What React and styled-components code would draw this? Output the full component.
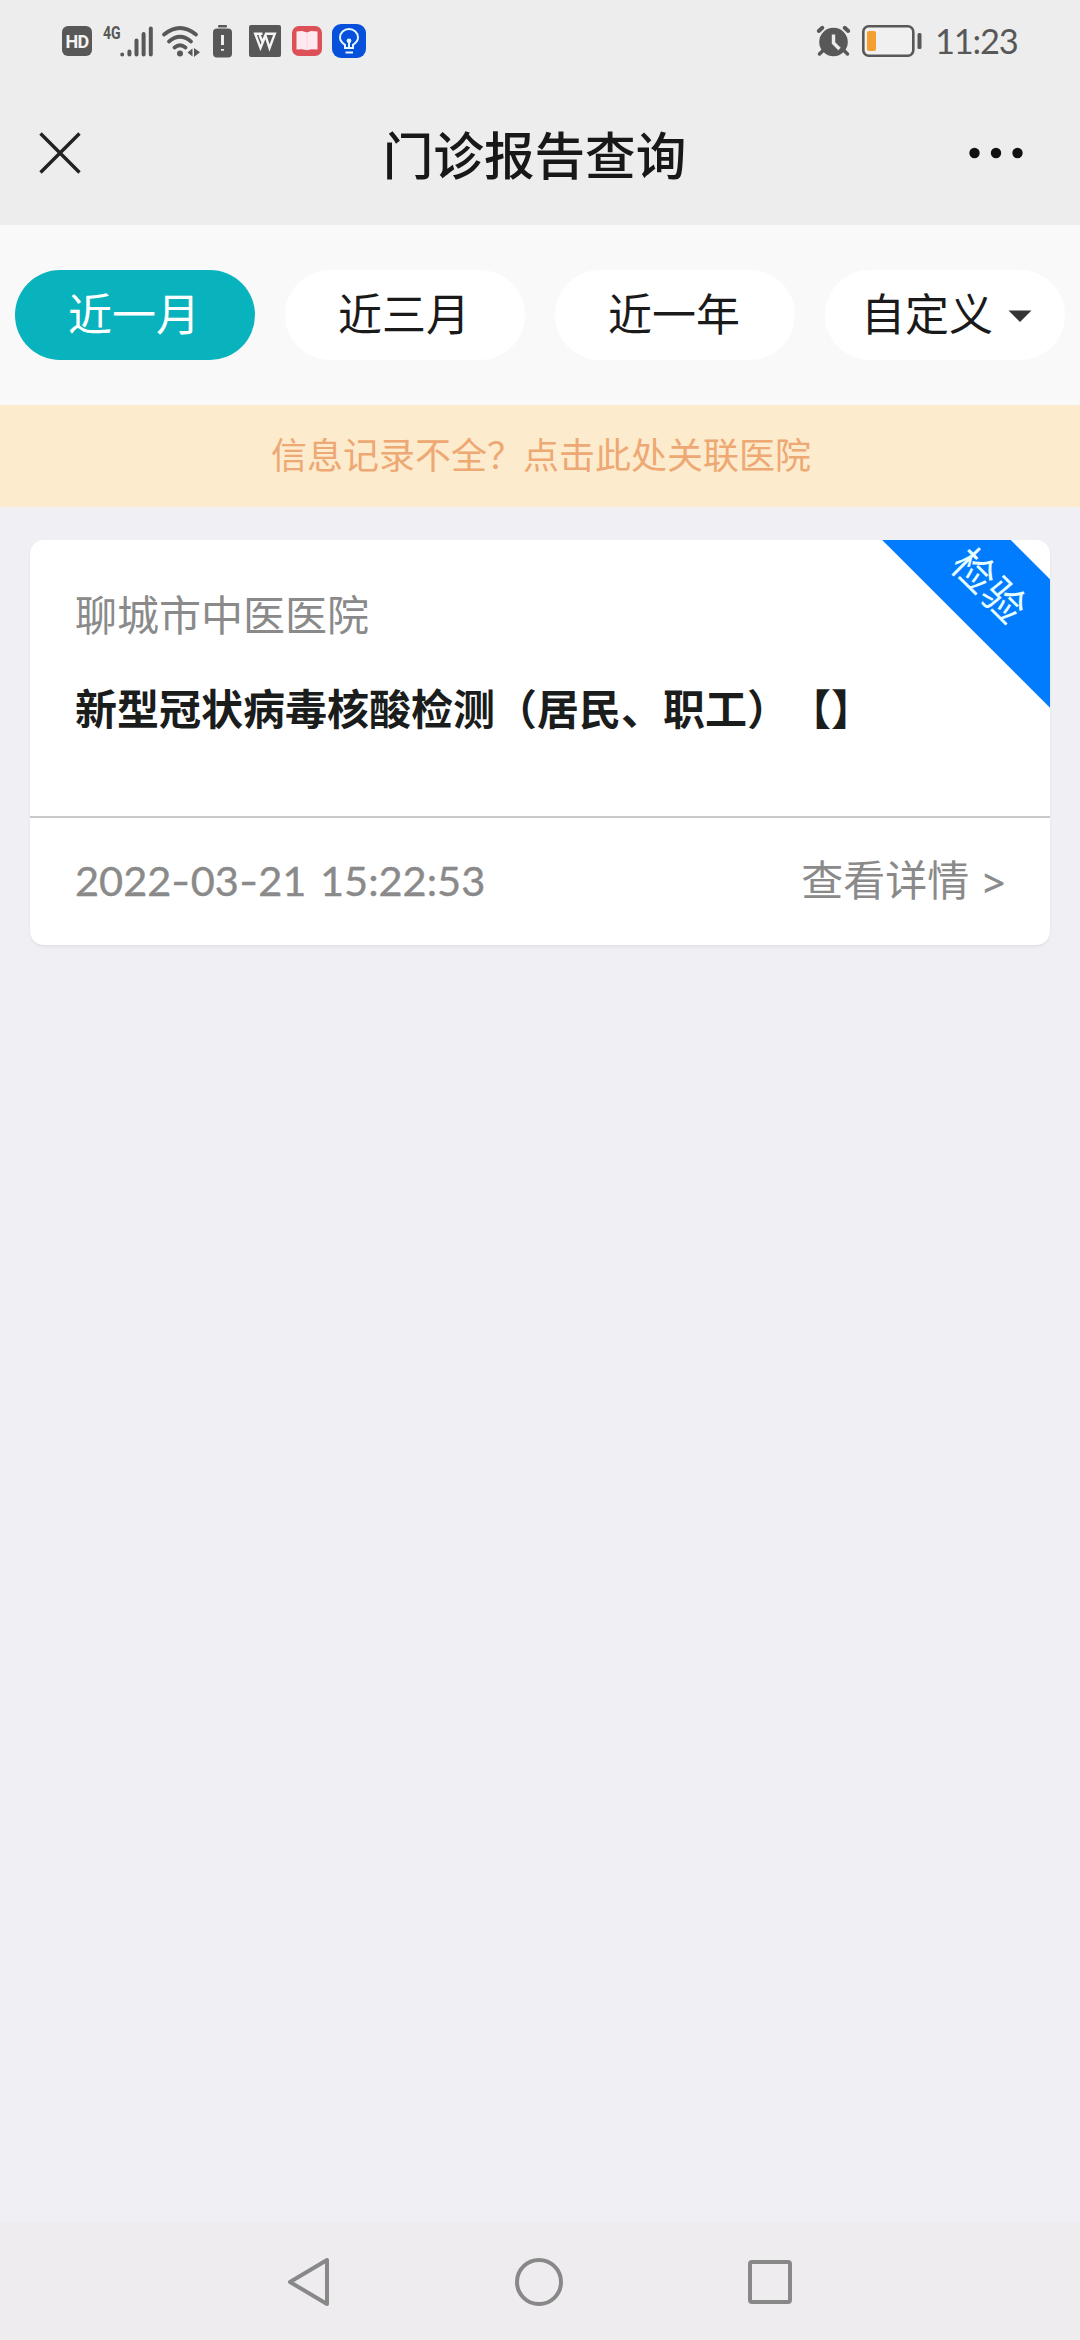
import React from "react";
import styled, { createGlobalStyle } from "styled-components";

const GlobalStyle = createGlobalStyle`
  * { box-sizing: border-box; }
  html, body { margin: 0; padding: 0; background: #f0eff3; }
  body { font-family: Roboto, "Noto Sans CJK SC", sans-serif; }
  svg { display: block; flex: none; overflow: visible; }
  button { font: inherit; border: 0; background: none; padding: 0; margin: 0; }
`;

const Screen = styled.div`
  width: 1080px;
  height: 2340px;
  display: flex;
  flex-direction: column;
  background: #f0eff3;
  overflow: hidden;
`;

const StatusBar = styled.div`
  height: 82px;
  flex: none;
  display: flex;
  justify-content: space-between;
  padding: 0 62px;
  background: #ededed;
  color: #585858;
`;

const StatusGroup = styled.div`
  display: flex;
  align-items: center;
  height: 82px;
`;

const Slot = styled.div`
  display: flex;
  align-items: center;
  width: ${(p) => p.$w}px;
  margin-left: ${(p) => p.$gap || 0}px;
`;

const HdBadge = styled.div`
  width: 30px;
  height: 30px;
  border-radius: 6px;
  background: #585858;
  color: #f4f4f4;
  font: 700 18px/31px Roboto, sans-serif;
  letter-spacing: -0.6px;
  text-align: center;
`;

const Network = styled.div`
  width: 17px;
  height: 30px;
  margin-left: 11px;
  font: 700 19px/14px Roboto, sans-serif;
  transform: scaleX(0.74);
  transform-origin: left;
  white-space: nowrap;
`;

const Clock = styled.div`
  width: 81px;
  margin-left: 13px;
  font: 400 34.5px/82px Lato, sans-serif;
  letter-spacing: -1.2px;
  white-space: nowrap;
  margin-right: 2px;
`;

const Header = styled.header`
  height: 143px;
  flex: none;
  display: grid;
  grid-template-columns: 160px 1fr 160px;
  align-items: start;
  background: #ededed;
`;

const CloseButton = styled.button`
  display: flex;
  padding: 50px 0 0 39px;
`;

const MoreButton = styled.button`
  display: flex;
  justify-content: flex-end;
  padding: 64px 57px 0 0;
`;

const Title = styled.h1`
  margin: 0;
  padding: 33px 11px 0 0;
  text-align: center;
  font: 500 50.6px/76px "Noto Sans CJK SC", sans-serif;
  color: #181818;
`;

const Tabs = styled.nav`
  height: 180px;
  flex: none;
  display: flex;
  gap: 30px;
  padding: 45px 15px;
  background: #f9f9f9;
`;

const Tab = styled.button`
  width: 240px;
  height: 90px;
  border-radius: 45px;
  display: flex;
  align-items: center;
  justify-content: center;
  gap: 15px;
  padding: ${(p) => (p.$menu ? "2px 0 0 3px" : "2px 2px 0 0")};
  font-size: 44px;
  line-height: 88px;
  background: ${(p) => (p.$active ? "#08b3bd" : "#ffffff")};
  color: ${(p) => (p.$active ? "#ffffff" : "#1a1a1a")};
`;

const Notice = styled.div`
  height: 102px;
  flex: none;
  background: #fdebcd;
  color: #eda873;
  text-align: center;
  font-size: 36px;
  line-height: 105px;
  padding-left: 2px;
`;

const List = styled.main`
  flex: 1;
  padding: 33px 30px;
`;

const Card = styled.article`
  position: relative;
  height: 405px;
  border-radius: 14px;
  background: #ffffff;
  overflow: hidden;
  box-shadow: 0 2px 3px rgba(0, 0, 0, 0.06);
`;

const CardBody = styled.div`
  height: 278px;
  padding: 46px 45px 0;
  border-bottom: 2px solid #c9c9c9;
`;

const Hospital = styled.div`
  font-size: 42px;
  line-height: 62px;
  color: #8a8a8a;
`;

const ReportName = styled.h2`
  margin: 28px 0 0;
  font: 700 42px/62px "Noto Sans CJK SC", sans-serif;
  text-spacing-trim: space-all;
  font-kerning: none;
  color: #1b1d1d;
  white-space: nowrap;
`;

const CardFooter = styled.div`
  height: 127px;
  display: flex;
  align-items: center;
  justify-content: space-between;
  padding: 0 45px;
  font-size: 42px;
  color: #8a8a8a;
`;

const DateText = styled.span`
  padding-bottom: 3px;
  font: 400 41.5px/60px Lato, sans-serif;
  word-spacing: 3px;
  white-space: nowrap;
  -webkit-text-stroke: 0.4px #8a8a8a;
`;

const Dash = styled.span`
  display: inline-block;
  margin: 0 2px;
  transform: scaleX(1.25);
`;

const Details = styled.span`
  display: flex;
  align-items: center;
  gap: 14px;
  line-height: 60px;
`;

const Arrow = styled.span`
  font: 400 38px/60px "Noto Sans", sans-serif;
  -webkit-text-stroke: 0.6px #8a8a8a;
`;

const Ribbon = styled.div`
  position: absolute;
  top: 7px;
  right: -119px;
  width: 340px;
  height: 91px;
  display: flex;
  align-items: center;
  justify-content: center;
  padding: 6px 24px 0 0;
  transform: rotate(45deg);
  background: #027cff;
  color: #e8ffff;
  font-size: 42px;
  line-height: 42px;
`;

const NavBar = styled.footer`
  height: 118px;
  flex: none;
  display: flex;
  justify-content: space-between;
  align-items: center;
  padding: 2px 286px 0 285px;
  background: #eeecef;
`;

const GREY = "#585858";

const SignalIcon = () => (
  <svg width="33" height="31" viewBox="0 0 33 31" fill="none" stroke={GREY} strokeWidth="4" strokeLinecap="round">
    <path d="M2.2 28.4v.2M9.4 25.5v3M16.5 14.5v14M23.6 8v20.5M30.8 2.5v26" />
  </svg>
);

const WifiIcon = () => (
  <svg width="38" height="31" viewBox="0 0 38 31" fill="none" stroke={GREY} strokeWidth="3.8" strokeLinecap="round">
    <path d="M2 8.5Q18 -4.500 34 8.500M7 15.500Q18 6 29 15.500M12.500 21.500Q18 17 23.500 21.500" />
    <circle cx="18" cy="27.500" r="3" fill={GREY} stroke="none" />
    <path d="M25.500 26.500l5-4v8zM32 22l6 4.300-6 4.700z" fill={GREY} stroke="none" />
  </svg>
);

const BatteryAlertIcon = () => (
  <svg width="20" height="33" viewBox="0 0 20 33">
    <rect x="5" y="0" width="9" height="2.500" rx="1" fill={GREY} />
    <rect x="0" y="3.500" width="19" height="29" rx="4" fill={GREY} />
    <path d="M9.500 10v10M9.500 24v1.800" stroke="#eee" strokeWidth="3" />
  </svg>
);

const OfficeIcon = () => (
  <svg width="32" height="32" viewBox="0 0 32 32">
    <rect width="32" height="32" rx="2" fill={GREY} />
    <path d="M13.500 8.800H6.200L11.500 23l5-12.500L20.500 23l5.300-14.200H17L13.500 17l-3-7" fill="none" stroke="#f5f5f5" strokeWidth="2.400" />
  </svg>
);

const BookIcon = () => (
  <svg width="30" height="30" viewBox="0 0 30 30">
    <rect width="30" height="30" rx="7" fill="#dd5058" />
    <path d="M4.500 5.500l5.500-.5 5 1.500 4-1.500 6.500.5v18l-6-.3-4.500 1-5-1-5.500.3z" fill="#ffe9f0" />
    <path d="M15 6.500V24" stroke="#fad8de" strokeWidth="1" />
  </svg>
);

const BulbIcon = () => (
  <svg width="34" height="34" viewBox="0 0 34 34" fill="none" stroke="#e5f7ff" strokeWidth="2">
    <rect width="34" height="34" rx="9" fill="#0650dc" stroke="none" />
    <path d="M13 24v-3.200c-3-2-5-4.300-5-7.300a9 8.500 0 0 1 18 0c0 3-2 5.300-5 7.300V24zM13.500 28.500h7.500M17 17v6" />
    <circle cx="17" cy="16.800" r="2.400" fill="#e5f7ff" stroke="none" />
  </svg>
);

const AlarmIcon = () => (
  <svg width="34" height="31" viewBox="0 0 34 31" fill="none" stroke={GREY} strokeLinecap="round">
    <circle cx="16.500" cy="16" r="14.300" fill={GREY} stroke="none" />
    <path d="M1.800 5l3.500-3.200M31.200 5l-3.500-3.200" strokeWidth="4" />
    <path d="M5.500 25l-3 3M27.500 25l3 3" strokeWidth="3.500" />
    <path d="M16.500 8.500v8.500l6 6" stroke="#ededed" strokeWidth="3.400" strokeLinecap="butt" />
  </svg>
);

const BatteryIcon = () => (
  <svg width="60" height="32" viewBox="0 0 60 32">
    <rect x="1.300" y="1.300" width="50" height="29.400" rx="5.500" fill="#f0f0f0" stroke={GREY} strokeWidth="2.600" />
    <rect x="5" y="6" width="9" height="20" rx="2" fill="#f4a030" />
    <rect x="55.500" y="8" width="4" height="16" rx="1.500" fill={GREY} />
  </svg>
);

const TABS = ["近一月", "近三月", "近一年", "自定义"];

export default function App() {
  return (
    <Screen>
      <GlobalStyle />
      <StatusBar>
        <StatusGroup>
          <HdBadge>HD</HdBadge>
          <Network>4G</Network>
          <SignalIcon />
          <Slot $w={38} $gap={9}><WifiIcon /></Slot>
          <Slot $w={20} $gap={13}><BatteryAlertIcon /></Slot>
          <Slot $w={32} $gap={16}><OfficeIcon /></Slot>
          <Slot $w={30} $gap={11}><BookIcon /></Slot>
          <Slot $w={34} $gap={10}><BulbIcon /></Slot>
        </StatusGroup>
        <StatusGroup>
          <Slot $w={34}><AlarmIcon /></Slot>
          <Slot $w={60} $gap={11}><BatteryIcon /></Slot>
          <Clock>11:23</Clock>
        </StatusGroup>
      </StatusBar>

      <Header>
        <CloseButton aria-label="关闭">
          <svg width="42" height="42" viewBox="0 0 42 42" stroke="#222" strokeWidth="3.400">
            <path d="M1.500 1.500l39 39M40.500 1.500l-39 39" />
          </svg>
        </CloseButton>
        <Title>门诊报告查询</Title>
        <MoreButton aria-label="更多">
          <svg width="54" height="14" viewBox="0 0 54 14" fill="#111">
            <circle cx="5.500" cy="7" r="5.200" />
            <circle cx="27" cy="7" r="5.200" />
            <circle cx="48.500" cy="7" r="5.200" />
          </svg>
        </MoreButton>
      </Header>

      <Tabs>
        {TABS.map((label, i) => (
          <Tab key={label} $active={i === 0} $menu={i === 3}>
            {label}
            {i === 3 && (
              <svg width="24" height="12" viewBox="0 0 24 12" fill="#333">
                <path d="M0.500 0.500h23L12 12z" />
              </svg>
            )}
          </Tab>
        ))}
      </Tabs>

      <Notice>信息记录不全？点击此处关联医院</Notice>

      <List>
        <Card>
          <CardBody>
            <Hospital>聊城市中医医院</Hospital>
            <ReportName>新型冠状病毒核酸检测（居民、职工）【】</ReportName>
          </CardBody>
          <CardFooter>
            <DateText>
              2022<Dash>-</Dash>03<Dash>-</Dash>21 15:22:53
            </DateText>
            <Details>
              查看详情<Arrow>&gt;</Arrow>
            </Details>
          </CardFooter>
          <Ribbon>检验</Ribbon>
        </Card>
      </List>

      <NavBar>
        <svg width="46" height="50" viewBox="0 0 46 50" fill="none" stroke="#888" strokeWidth="4" strokeLinejoin="round">
          <path d="M5 25L42 3v44z" />
        </svg>
        <svg width="50" height="50" viewBox="0 0 50 50" fill="none" stroke="#888" strokeWidth="4">
          <circle cx="25" cy="25" r="22" />
        </svg>
        <svg width="48" height="48" viewBox="0 0 48 48" fill="none" stroke="#888" strokeWidth="4">
          <rect x="4" y="4" width="40" height="40" rx="2" />
        </svg>
      </NavBar>
    </Screen>
  );
}
